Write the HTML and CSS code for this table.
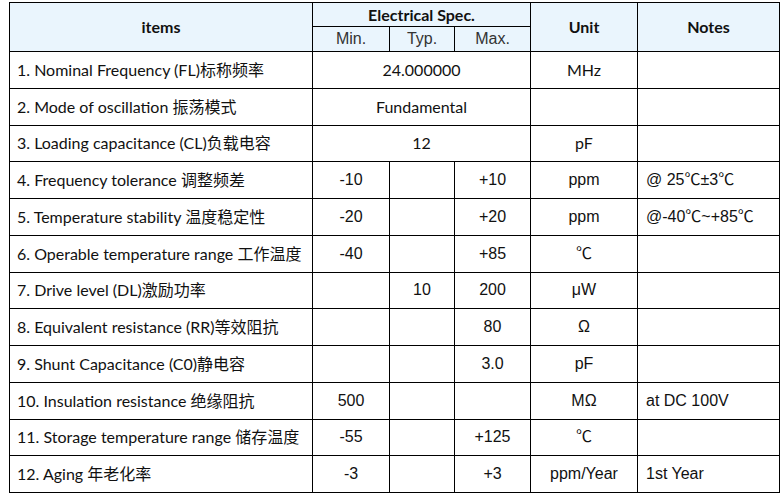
FILE: index.html
```html
<!DOCTYPE html>
<html>
<head>
<meta charset="utf-8">
<link rel="stylesheet" href="styles.css">
</head>
<body>
<table class="spec">
  <colgroup>
    <col class="c-item"><col class="c-min"><col class="c-typ"><col class="c-max"><col class="c-unit"><col class="c-notes">
  </colgroup>
  <thead>
    <tr class="h1">
      <th rowspan="2" class="hb">items</th>
      <th colspan="3" class="hb">Electrical Spec.</th>
      <th rowspan="2" class="hb">Unit</th>
      <th rowspan="2" class="hb">Notes</th>
    </tr>
    <tr class="h2">
      <th class="hn">Min.</th>
      <th class="hn">Typ.</th>
      <th class="hn">Max.</th>
    </tr>
  </thead>
  <tbody>
    <tr><td class="item">1. Nominal Frequency (FL)标称频率</td><td colspan="3" class="ya">24.000000</td><td class="ya">MHz</td><td></td></tr>
    <tr><td class="item">2. Mode of oscillation 振荡模式</td><td colspan="3" class="ya">Fundamental</td><td></td><td></td></tr>
    <tr><td class="item">3. Loading capacitance (CL)负载电容</td><td colspan="3" class="ya">12</td><td class="ya">pF</td><td></td></tr>
    <tr><td class="item">4. Frequency tolerance 调整频差</td><td class="ar">-10</td><td></td><td class="ar">+10</td><td class="ar">ppm</td><td class="note">@ 25℃±3℃</td></tr>
    <tr><td class="item">5. Temperature stability 温度稳定性</td><td class="ar">-20</td><td></td><td class="ar">+20</td><td class="ar">ppm</td><td class="note">@-40℃~+85℃</td></tr>
    <tr><td class="item">6. Operable temperature range 工作温度</td><td class="ar">-40</td><td></td><td class="ar">+85</td><td class="ar">℃</td><td></td></tr>
    <tr><td class="item">7. Drive level (DL)激励功率</td><td></td><td class="ar">10</td><td class="ar">200</td><td class="ar">μW</td><td></td></tr>
    <tr><td class="item">8. Equivalent resistance (RR)等效阻抗</td><td></td><td></td><td class="ar">80</td><td class="ar">Ω</td><td></td></tr>
    <tr><td class="item">9. Shunt Capacitance (C0)静电容</td><td></td><td></td><td class="ar">3.0</td><td class="ar">pF</td><td></td></tr>
    <tr><td class="item">10. Insulation resistance 绝缘阻抗</td><td class="ar">500</td><td></td><td></td><td class="ar">MΩ</td><td class="note">at DC 100V</td></tr>
    <tr><td class="item">11. Storage temperature range 储存温度</td><td class="ar">-55</td><td></td><td class="ar">+125</td><td class="ar">℃</td><td></td></tr>
    <tr><td class="item">12. Aging 年老化率</td><td class="ar">-3</td><td></td><td class="ar">+3</td><td class="ar">ppm/Year</td><td class="note">1st Year</td></tr>
  </tbody>
</table>
</body>
</html>
```
FILE: styles.css
```css
html, body {
  margin: 0;
  padding: 0;
  background: #fff;
}
body {
  padding: 2px 0 0 9px;
}
.spec {
  border-collapse: collapse;
  table-layout: fixed;
  width: 770px;
  font-family: "Lato", "Noto Sans CJK SC", sans-serif;
  font-size: 16px;
  color: #111;
}
.c-item { width: 303px; }
.c-min { width: 77px; }
.c-typ { width: 65px; }
.c-max { width: 76px; }
.c-unit { width: 107px; }
.c-notes { width: 142px; }
.spec th, .spec td {
  border: 1px solid #000;
  padding: 0;
  white-space: nowrap;
  overflow: hidden;
  line-height: 20px;
}
.spec thead th {
  background: #eaf5fd;
}
.h1 { height: 24px; }
.h2 { height: 25px; }
.hb {
  font-weight: bold;
  font-family: "Lato", "Noto Sans CJK SC", sans-serif;
  text-align: center;
}
.hn {
  font-weight: normal;
  font-family: "Liberation Sans", "Noto Sans CJK SC", sans-serif;
  color: #333;
  text-align: center;
}
.spec tbody tr { height: 36.75px; }
.item {
  text-align: left;
  padding-left: 7px !important;
}
.ya {
  text-align: center;
}
.ar {
  text-align: center;
  font-family: "Liberation Sans", "Noto Sans CJK SC", sans-serif;
}
.note {
  text-align: left;
  padding-left: 8px !important;
  font-family: "Liberation Sans", "Noto Sans CJK SC", sans-serif;
}
```
